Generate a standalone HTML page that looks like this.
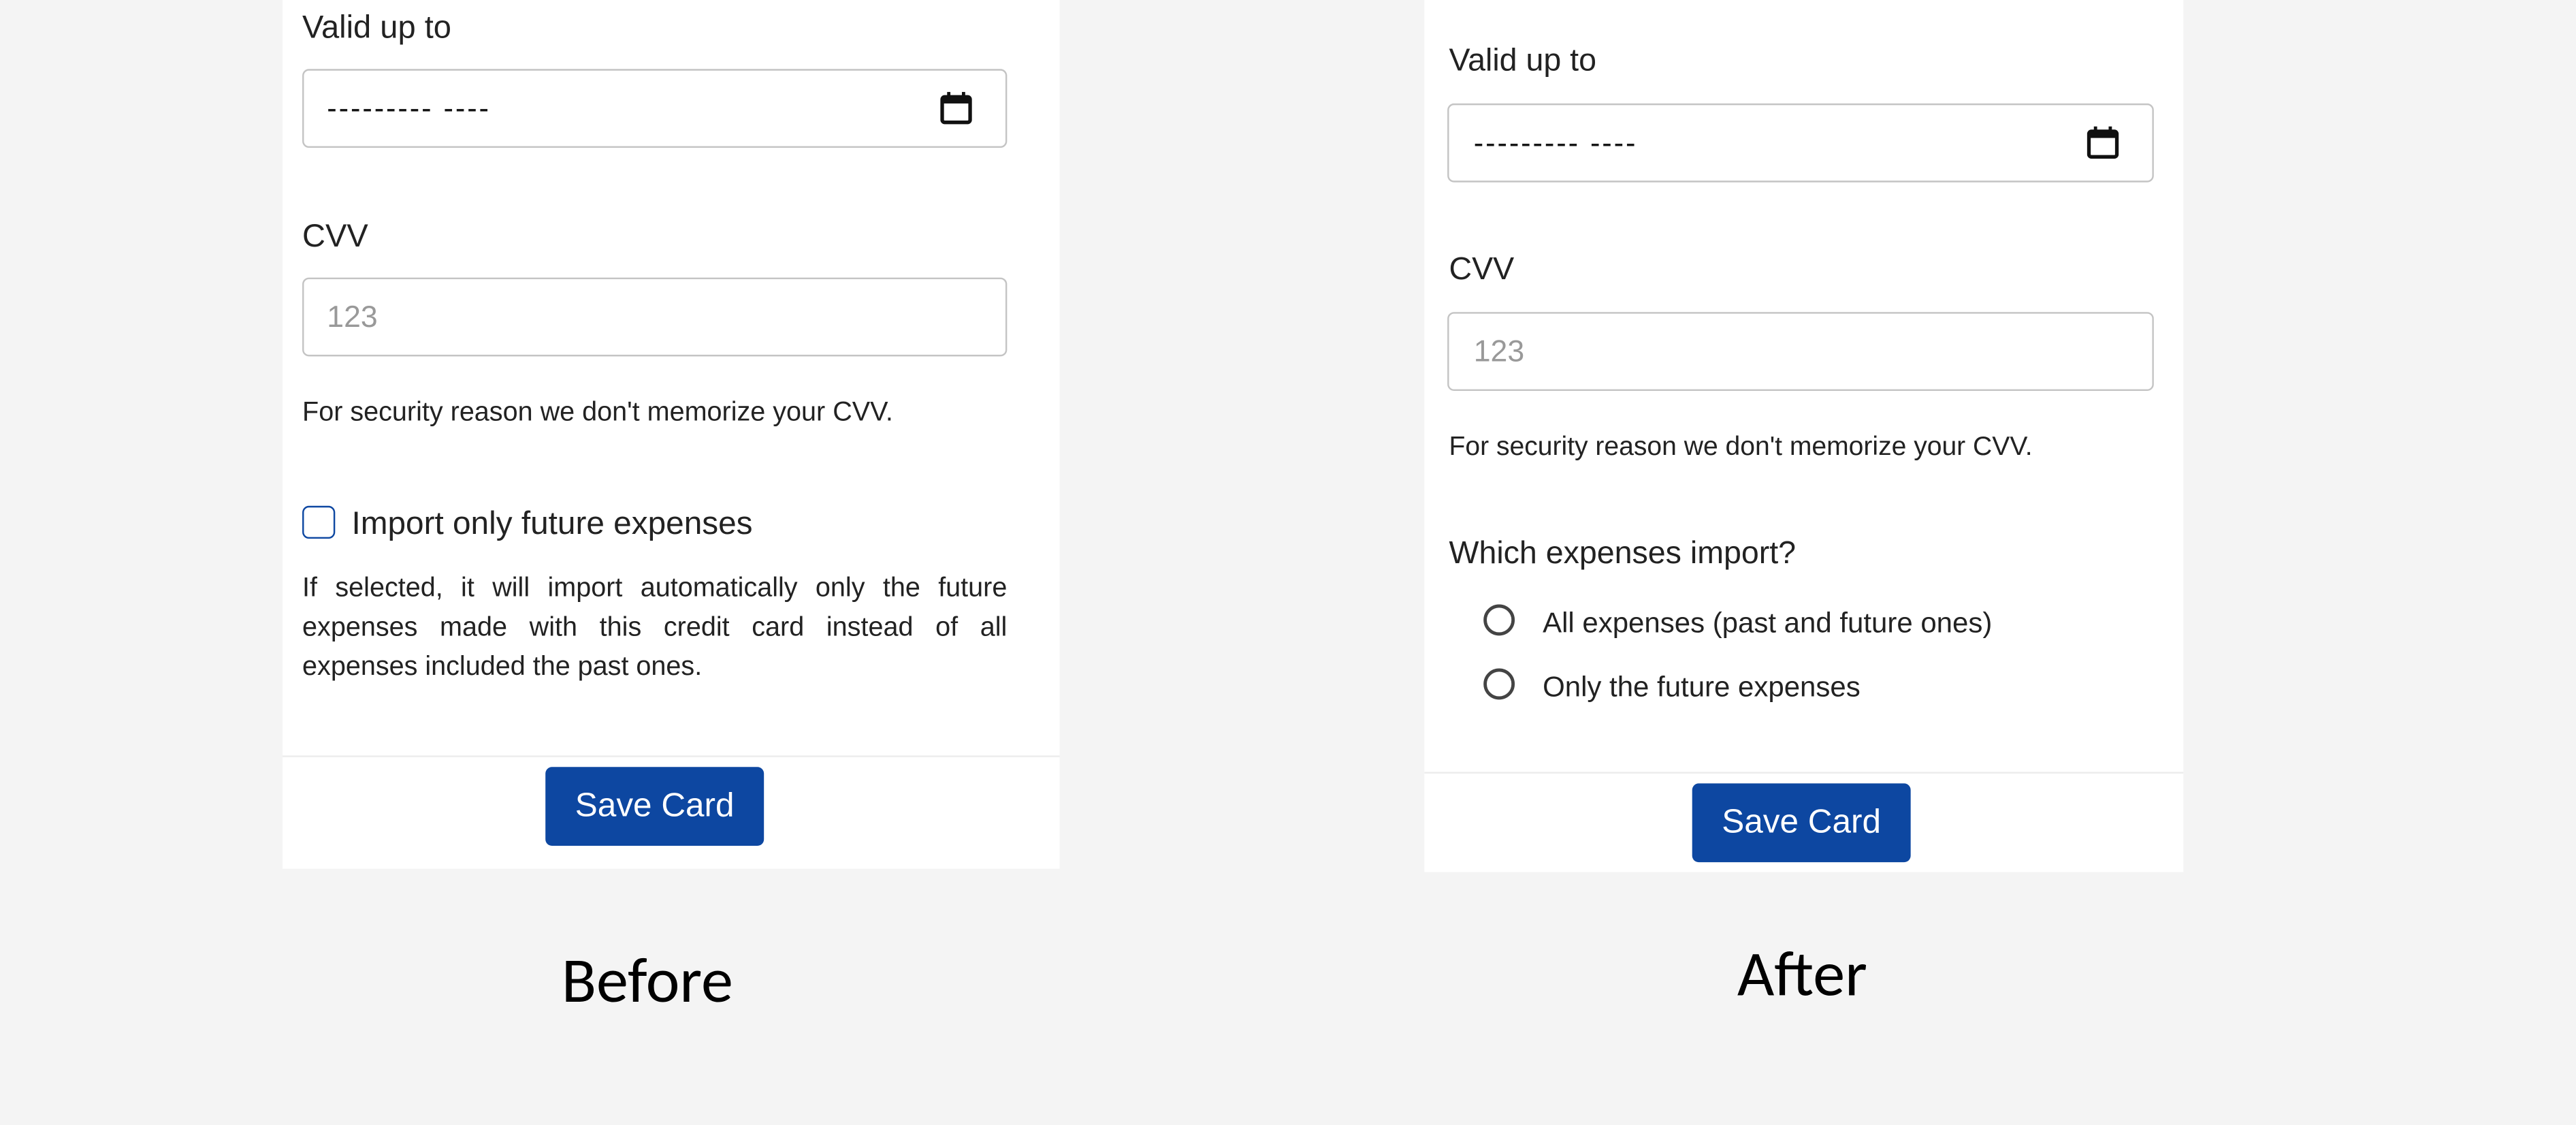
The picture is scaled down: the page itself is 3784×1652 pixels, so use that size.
<!DOCTYPE html>
<html><head><meta charset="utf-8"><style>
html,body{margin:0;padding:0;}
body{width:3784px;height:1652px;overflow:hidden;background:#f4f4f4;}
#s{position:absolute;left:0;top:0;width:1568px;height:685px;transform:scale(2.4133,2.4117);transform-origin:0 0;font-family:"Liberation Sans",Arial,sans-serif;color:#222;}
.a{position:absolute;white-space:nowrap;}
.panel{position:absolute;background:#fff;}
.inp{position:absolute;border:1.5px solid #c4c4c4;border-radius:4px;box-sizing:border-box;background:#fff;}
.btn{position:absolute;background:#0d47a1;border-radius:4px;color:#fff;font-size:20.5px;text-align:center;line-height:48px;}
.sep{position:absolute;height:1px;background:#ececec;}
.cal{position:absolute;width:20px;height:21px;}
.cap{position:absolute;font-family:"Carlito","Liberation Sans",sans-serif;font-size:39px;color:#000;text-align:center;}
.dash{font-size:18px;color:#111;letter-spacing:1.2px;}
.j{position:absolute;left:184px;width:429px;font-size:16.4px;line-height:24px;text-align:justify;text-align-last:justify;white-space:nowrap;}
</style></head><body><div id="s">
<!-- left panel -->
<div class="panel" style="left:172px;top:0;width:473px;height:529px;"></div>
<div class="sep" style="left:172px;top:460px;width:473px;"></div>
<div class="a" style="left:184px;top:6px;font-size:19.5px;">Valid up to</div>
<div class="inp" style="left:184px;top:42px;width:429px;height:48px;"></div>
<div class="a dash" style="left:199px;top:56px;">--------- ----</div>
<svg class="cal" style="left:572px;top:55px;" viewBox="0 0 20 21"><rect x="1.5" y="4" width="17" height="15.5" rx="1.5" fill="none" stroke="#111" stroke-width="2.2"/><rect x="1.5" y="4" width="17" height="4" fill="#111"/><rect x="4.5" y="1" width="2" height="4" fill="#111"/><rect x="13.5" y="1" width="2" height="4" fill="#111"/></svg>
<div class="a" style="left:184px;top:133px;font-size:19.5px;">CVV</div>
<div class="inp" style="left:184px;top:169px;width:429px;height:48px;"></div>
<div class="a" style="left:199px;top:182px;font-size:18.5px;color:#999;">123</div>
<div class="a" style="left:184px;top:242px;font-size:16.4px;">For security reason we don't memorize your CVV.</div>
<div style="position:absolute;left:184px;top:308px;width:20px;height:20px;border:1.5px solid #0d47a1;border-radius:4px;box-sizing:border-box;"></div>
<div class="a" style="left:214px;top:308px;font-size:19.8px;">Import only future expenses</div>
<div class="j" style="top:346px;">If selected, it will import automatically only the future</div>
<div class="j" style="top:370px;">expenses made with this credit card instead of all</div>
<div class="a" style="left:184px;top:394px;font-size:16.4px;line-height:24px;">expenses included the past ones.</div>
<div class="btn" style="left:332px;top:467px;width:133px;height:48px;">Save Card</div>
<div class="cap" style="left:294px;top:574px;width:200px;">Before</div>

<!-- right panel -->
<div class="panel" style="left:867px;top:0;width:462px;height:531px;"></div>
<div class="sep" style="left:867px;top:470px;width:462px;"></div>
<div class="a" style="left:882px;top:27px;font-size:19.3px;">Valid up to</div>
<div class="inp" style="left:881px;top:63px;width:430px;height:48px;"></div>
<div class="a dash" style="left:897px;top:77px;">--------- ----</div>
<svg class="cal" style="left:1270px;top:76px;" viewBox="0 0 20 21"><rect x="1.5" y="4" width="17" height="15.5" rx="1.5" fill="none" stroke="#111" stroke-width="2.2"/><rect x="1.5" y="4" width="17" height="4" fill="#111"/><rect x="4.5" y="1" width="2" height="4" fill="#111"/><rect x="13.5" y="1" width="2" height="4" fill="#111"/></svg>
<div class="a" style="left:882px;top:154px;font-size:19.3px;">CVV</div>
<div class="inp" style="left:881px;top:190px;width:430px;height:48px;"></div>
<div class="a" style="left:897px;top:203px;font-size:18.5px;color:#999;">123</div>
<div class="a" style="left:882px;top:263px;font-size:16.2px;">For security reason we don't memorize your CVV.</div>
<div class="a" style="left:882px;top:327px;font-size:19.3px;">Which expenses import?</div>
<div style="position:absolute;left:903px;top:368px;width:19px;height:19px;border:2.2px solid #444;border-radius:50%;box-sizing:border-box;"></div>
<div class="a" style="left:939px;top:369px;font-size:17.4px;">All expenses (past and future ones)</div>
<div style="position:absolute;left:903px;top:407px;width:19px;height:19px;border:2.2px solid #444;border-radius:50%;box-sizing:border-box;"></div>
<div class="a" style="left:939px;top:408px;font-size:17.4px;">Only the future expenses</div>
<div class="btn" style="left:1030px;top:477px;width:133px;height:48px;">Save Card</div>
<div class="cap" style="left:997px;top:570px;width:200px;">After</div>
</div></body></html>
